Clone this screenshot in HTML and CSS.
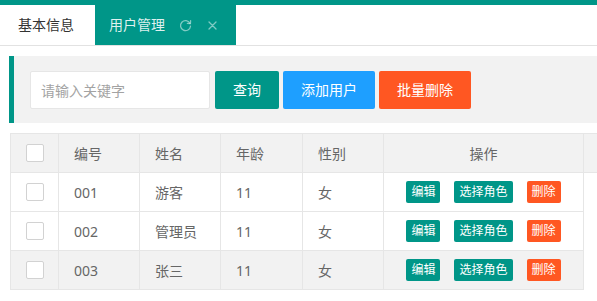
FILE: index.html
```html
<!DOCTYPE html>
<html lang="zh-CN">
<head>
<meta charset="utf-8">
<title>用户管理</title>
<link rel="stylesheet" href="styles.css">
</head>
<body>
<div class="topline"></div>
<div class="tabs">
  <div class="tab">基本信息</div>
  <div class="tab active">
    <span class="tab-text">用户管理</span>
    <svg class="ico-refresh" width="13" height="13" viewBox="0 0 13 13"><path d="M10.9 4.2A5 5 0 1 0 11.5 7.2" fill="none" stroke="currentColor" stroke-width="1.3" stroke-linecap="round"/><path d="M11.6 1.6 L11.4 4.7 L8.4 4.3" fill="none" stroke="currentColor" stroke-width="1.3" stroke-linecap="round" stroke-linejoin="round"/></svg>
    <svg class="ico-close" width="9" height="9" viewBox="0 0 9 9"><path d="M1 1 L8 8 M8 1 L1 8" stroke="currentColor" stroke-width="1.3" stroke-linecap="round"/></svg>
  </div>
</div>
<div class="content">
  <div class="quote">
    <input class="search" type="text" placeholder="请输入关键字">
    <button class="btn teal">查询</button>
    <button class="btn blue">添加用户</button>
    <button class="btn orange">批量删除</button>
  </div>
  <div class="table">
    <div class="row head">
      <div class="cell c1"><span class="cb"></span></div>
      <div class="cell c2">编号</div>
      <div class="cell c3">姓名</div>
      <div class="cell c4">年龄</div>
      <div class="cell c5">性别</div>
      <div class="cell c6 center">操作</div>
      <div class="patch"></div>
    </div>
    <div class="row">
      <div class="cell c1"><span class="cb"></span></div>
      <div class="cell c2">001</div>
      <div class="cell c3">游客</div>
      <div class="cell c4">11</div>
      <div class="cell c5">女</div>
      <div class="cell c6 center ops"><span class="xs teal">编辑</span><span class="xs teal">选择角色</span><span class="xs orange">删除</span></div>
    </div>
    <div class="row">
      <div class="cell c1"><span class="cb"></span></div>
      <div class="cell c2">002</div>
      <div class="cell c3">管理员</div>
      <div class="cell c4">11</div>
      <div class="cell c5">女</div>
      <div class="cell c6 center ops"><span class="xs teal">编辑</span><span class="xs teal">选择角色</span><span class="xs orange">删除</span></div>
    </div>
    <div class="row hover">
      <div class="cell c1"><span class="cb"></span></div>
      <div class="cell c2">003</div>
      <div class="cell c3">张三</div>
      <div class="cell c4">11</div>
      <div class="cell c5">女</div>
      <div class="cell c6 center ops"><span class="xs teal">编辑</span><span class="xs teal">选择角色</span><span class="xs orange">删除</span></div>
    </div>
  </div>
</div>
</body>
</html>
```
FILE: styles.css
```css
* { box-sizing: border-box; }
html, body { margin: 0; padding: 0; background: #fff; overflow: hidden; }
body {
  font-family: "Noto Sans", "Noto Sans CJK SC", sans-serif;
  font-size: 14px;
  color: #666;
  width: 597px;
  height: 301px;
}
.topline { height: 5px; background: #009688; }
.tabs {
  display: flex;
  height: 41px;
  border-bottom: 1px solid #e2e2e2;
}
.tab {
  height: 40px;
  line-height: 40px;
  padding: 0 20px 0 18px;
  color: #333;
  width: 95px;
}
.tab.active {
  width: 141px;
  background: #009688;
  color: rgba(255,255,255,0.88);
  padding: 0 0 0 14px;
  display: flex;
  align-items: center;
}
.tab-text { line-height: 40px; }
.ico-refresh { color: rgba(255,255,255,0.5); margin-left: 14px; }
.ico-close { color: rgba(255,255,255,0.5); margin-left: 16px; }
.content { padding: 10px 0 0 0; }
.quote {
  margin-left: 9px;
  background: #f2f2f2;
  border-left: 5px solid #009688;
  padding: 15px 15px 14px 16px;
  height: 67px;
  display: flex;
  align-items: center;
}
.search {
  width: 180px;
  height: 38px;
  border: 1px solid #e6e6e6;
  border-radius: 2px;
  background: #fff;
  padding: 0 10px;
  font-family: inherit;
  font-size: 14px;
  color: #333;
  outline: none;
  margin: 0;
}
.search::placeholder { color: #a3a3a3; }
.btn {
  height: 38px;
  line-height: 38px;
  padding: 0 18px;
  border: none;
  border-radius: 2px;
  color: #fff;
  font-family: inherit;
  font-size: 14px;
  margin: 0 0 0 4px;
  white-space: nowrap;
}
.quote .btn.teal { margin-left: 5px; }
.teal { background: #009688; }
.blue { background: #1e9fff; }
.orange { background: #ff5722; }
.table { margin: 10px 0 0 10px; }
.row { display: flex; }
.row.head {
  background: #f2f2f2;
  border-top: 1px solid #e6e6e6;
  border-bottom: 1px solid #e6e6e6;
}
.cell {
  height: 39px;
  display: flex;
  align-items: center;
  padding: 0 15px;
  border-right: 1px solid #e6e6e6;
  border-bottom: 1px solid #e6e6e6;
  white-space: nowrap;
}
.head .cell { height: 38px; border-bottom: none; }
.c1 { width: 49px; border-left: 1px solid #e6e6e6; justify-content: center; padding: 0; }
.c2 { width: 81px; }
.c3 { width: 81px; }
.c4 { width: 82px; }
.c5 { width: 81px; }
.c6 { width: 200px; }
.center { justify-content: center; }
.patch { flex: 1; }
.row.hover .cell { background: #f2f2f2; }
.cb {
  width: 18px;
  height: 18px;
  border: 1px solid #d2d2d2;
  border-radius: 2px;
  background: #fff;
  display: block;
}
.ops { gap: 14px; }
.xs {
  height: 22px;
  line-height: 22px;
  padding: 0 5px;
  font-size: 12px;
  color: #fff;
  border-radius: 2px;
}
```
